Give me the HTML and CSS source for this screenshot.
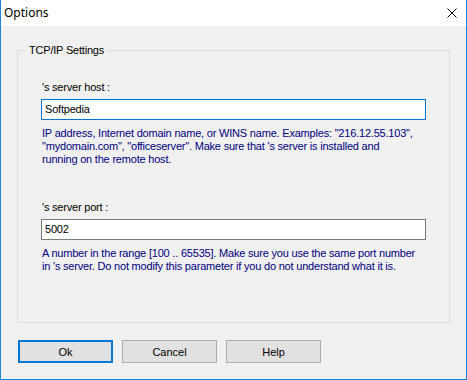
FILE: index.html
```html
<!DOCTYPE html>
<html lang="en">
<head>
    <meta charset="UTF-8">
    <title>Options</title>
    <link rel="stylesheet" href="styles.css">
</head>
<body>
    <div class="window">
        <div class="titlebar">
            <span class="title">Options</span>
            <span class="close">
                <svg width="10" height="10" viewBox="0 0 10 10">
                    <path d="M0.5 0.5 L9.5 9.5 M9.5 0.5 L0.5 9.5" stroke="#000" stroke-width="1" fill="none"/>
                </svg>
            </span>
        </div>
        <div class="content">
            <fieldset class="group">
                <legend>TCP/IP Settings</legend>

                <div class="field">
                    <div class="label">'s server host :</div>
                    <div class="input focused">Softpedia</div>
                    <div class="hint">IP address, Internet domain name, or WINS name. Examples: "216.12.55.103",<br>"mydomain.com", "officeserver". Make sure that 's server is installed and<br>running on the remote host.</div>
                </div>

                <div class="field port">
                    <div class="label">'s server port :</div>
                    <div class="input">5002</div>
                    <div class="hint">A number in the range [100 .. 65535]. Make sure you use the same port number<br>in 's server. Do not modify this parameter if you do not understand what it is.</div>
                </div>
            </fieldset>

            <div class="buttons">
                <button class="default">Ok</button>
                <button>Cancel</button>
                <button>Help</button>
            </div>
        </div>
    </div>
</body>
</html>
```

FILE: styles.css
```css
body {
    margin: 0;
    padding: 0;
    font-family: "Liberation Sans", Arial, sans-serif;
    font-size: 11px;
    letter-spacing: -0.2px;
}

.window {
    width: 467px;
    height: 380px;
    box-sizing: border-box;
    border: 1px solid #1883d7;
    border-top: none;
    background-color: #f0f0f0;
    display: flex;
    flex-direction: column;
}

.titlebar {
    height: 26px;
    background: #fff;
    display: flex;
    align-items: center;
    justify-content: space-between;
    padding: 0 9px 0 3px;
}

.title {
    font-family: "Noto Sans", sans-serif;
    font-size: 12px;
    letter-spacing: 0;
    color: #000;
    margin-top: -1px;
}

.close {
    display: flex;
}

.content {
    padding: 18px 16px 0 16px;
}

.group {
    margin: 0;
    padding: 0 0 0 24px;
    width: 433px;
    height: 279px;
    box-sizing: border-box;
    border: 1px solid #dcdcdc;
}

.group legend {
    margin-left: -16px;
    padding: 0 3px;
    line-height: 13px;
    color: #000;
}

.field {
    padding-top: 24px;
}

.field.port {
    padding-top: 35px;
}

.label {
    line-height: 13px;
    color: #000;
}

.input {
    margin-top: 5px;
    margin-left: -1px;
    width: 385px;
    height: 21px;
    box-sizing: border-box;
    border: 1px solid #7a7a7a;
    background: #fff;
    line-height: 19px;
    padding-left: 3px;
    color: #000;
}

.input.focused {
    border-color: #0078d7;
}

.hint {
    margin-top: 7px;
    line-height: 13px;
    color: #000080;
}

.buttons {
    display: flex;
    gap: 9px;
    margin-top: 17px;
    padding-left: 1px;
}

.buttons button {
    width: 95px;
    height: 23px;
    box-sizing: border-box;
    border: 1px solid #adadad;
    background-color: #e1e1e1;
    font-family: "Liberation Sans", Arial, sans-serif;
    font-size: 11px;
    color: #000;
    padding: 0;
}

.buttons button.default {
    border: 2px solid #0078d7;
}
```
